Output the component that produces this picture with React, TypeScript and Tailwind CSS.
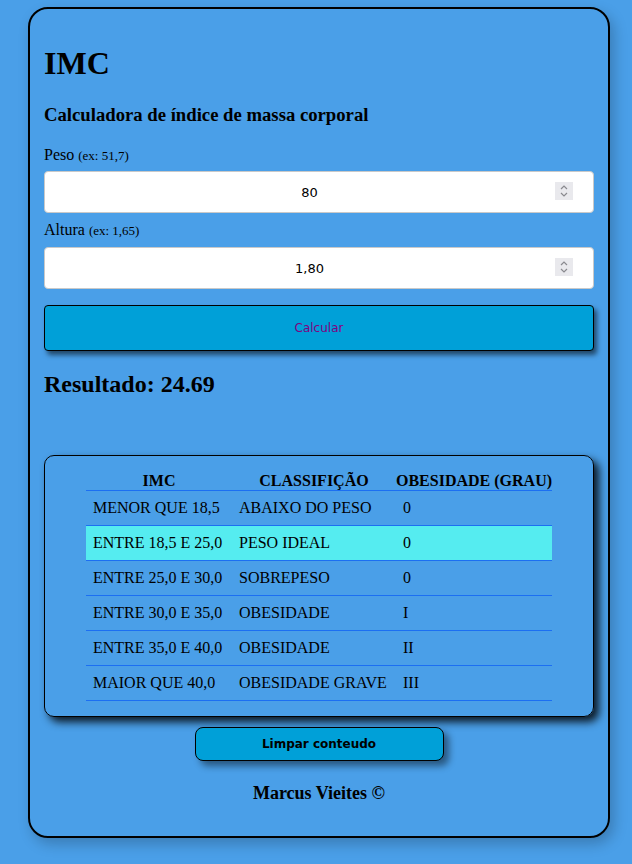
import React from "react";

const rows = [
  { imc: "MENOR QUE 18,5", cls: "ABAIXO DO PESO", grau: "0" },
  { imc: "ENTRE 18,5 E 25,0", cls: "PESO IDEAL", grau: "0", active: true },
  { imc: "ENTRE 25,0 E 30,0", cls: "SOBREPESO", grau: "0" },
  { imc: "ENTRE 30,0 E 35,0", cls: "OBESIDADE", grau: "I" },
  { imc: "ENTRE 35,0 E 40,0", cls: "OBESIDADE", grau: "II" },
  { imc: "MAIOR QUE 40,0", cls: "OBESIDADE GRAVE", grau: "III" },
];

function Spinner() {
  return (
    <div className="pointer-events-none absolute right-[21px] top-[11px] flex h-[18px] w-[18px] flex-col items-center justify-center bg-[#e9e9ed]">
      <svg width="10" height="16" viewBox="0 0 10 16" fill="none" stroke="#8a8a8f" strokeWidth="1.2">
        <path d="M2 6 L5 3 L8 6" />
        <path d="M2 10 L5 13 L8 10" />
      </svg>
    </div>
  );
}

function NumberField({ value }: { value: string }) {
  return (
    <div className="relative">
      <input
        type="text"
        readOnly
        value={value}
        className="block h-[42px] w-full rounded-[4px] border border-[#c9c9c9] bg-white pr-[19px] text-center text-[13px] text-black outline-none [font-family:'DejaVu_Sans',sans-serif]"
      />
      <Spinner />
    </div>
  );
}

export default function App() {
  return (
    <div className="min-h-screen bg-[#4a9fe8] pt-[7px] pb-[28px] text-black [font-family:'Liberation_Serif',serif]">
      <div className="ml-[28px] w-[582px] rounded-[20px] border-2 border-black px-[14px] pt-[38px] pb-[34px] shadow-[4px_6px_14px_rgba(0,0,0,0.22)]">
        <h1 className="text-[32px] font-bold leading-[32px]">IMC</h1>
        <h3 className="mt-[26px] text-[18.7px] font-bold leading-[19px]">
          Calculadora de índice de massa corporal
        </h3>

        <label className="mt-[23px] block text-[16px] leading-[16px]">
          Peso <span className="text-[13px] leading-none">(ex: 51,7)</span>
        </label>
        <div className="mt-[8px]">
          <NumberField value="80" />
        </div>

        <label className="mt-[9px] block text-[16px] leading-[16px]">
          Altura <span className="text-[13px] leading-none">(ex: 1,65)</span>
        </label>
        <div className="mt-[9px]">
          <NumberField value="1,80" />
        </div>

        <button className="mt-[16px] block h-[46px] w-full rounded-[4px] border border-black bg-[#00a0d8] text-[12px] text-[#800080] shadow-[3px_4px_5px_rgba(0,0,0,0.55)] [font-family:'DejaVu_Sans',sans-serif]">
          Calcular
        </button>

        <h2 className="mt-[21px] text-[24px] font-bold leading-[24px]">Resultado: 24.69</h2>

        <div className="mt-[59px] rounded-[10px] border border-black pt-[16px] pb-[15px] shadow-[5px_5px_9px_rgba(0,0,0,0.85)]">
          <table className="mx-auto w-[466px] table-fixed border-separate border-spacing-0 text-[16px]">
            <colgroup>
              <col className="w-[146px]" />
              <col className="w-[164px]" />
              <col className="w-[156px]" />
            </colgroup>
            <thead>
              <tr>
                <th className="h-[19px] whitespace-nowrap border-b border-[#1c6ff2] p-0 text-center font-bold leading-[18px]">IMC</th>
                <th className="h-[19px] whitespace-nowrap border-b border-[#1c6ff2] p-0 text-center font-bold leading-[18px]">CLASSIFIÇÃO</th>
                <th className="h-[19px] whitespace-nowrap border-b border-[#1c6ff2] p-0 text-center font-bold leading-[18px]">OBESIDADE (GRAU)</th>
              </tr>
            </thead>
            <tbody>
              {rows.map((r) => (
                <tr key={r.imc} className={r.active ? "bg-[#55ecf0]" : ""}>
                  <td className="h-[35px] whitespace-nowrap border-b border-[#1c6ff2] py-0 pl-[7px] leading-[34px]">{r.imc}</td>
                  <td className="h-[35px] whitespace-nowrap border-b border-[#1c6ff2] py-0 pl-[7px] leading-[34px]">{r.cls}</td>
                  <td className="h-[35px] whitespace-nowrap border-b border-[#1c6ff2] py-0 pl-[7px] leading-[34px]">{r.grau}</td>
                </tr>
              ))}
            </tbody>
          </table>
        </div>

        <button className="mx-auto mt-[10px] block h-[34px] w-[249px] rounded-[8px] border border-black bg-[#00a0d8] text-[12px] font-bold text-black shadow-[5px_5px_7px_rgba(0,0,0,0.45)] [font-family:'DejaVu_Sans',sans-serif]">
          Limpar conteudo
        </button>

        <p className="mt-[23px] text-center text-[18px] font-bold leading-[18px]">Marcus Vieites ©</p>
      </div>
    </div>
  );
}
